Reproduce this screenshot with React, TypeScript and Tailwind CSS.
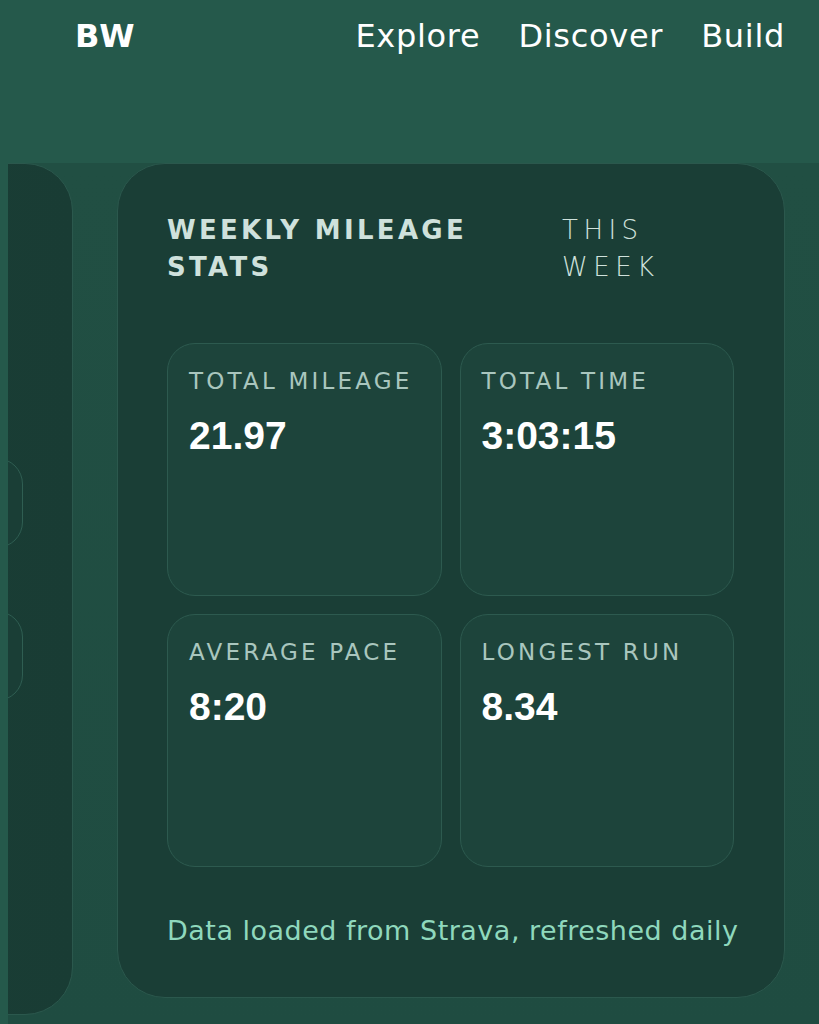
import React from 'react';

const stats = [
  { label: 'TOTAL MILEAGE', value: '21.97' },
  { label: 'TOTAL TIME', value: '3:03:15' },
  { label: 'AVERAGE PACE', value: '8:20' },
  { label: 'LONGEST RUN', value: '8.34' },
];

function StatCard({ label, value }: { label: string; value: string }) {
  return (
    <div className="h-[253px] rounded-[28px] border border-[#2d5a4f] bg-[#1d443b] px-[21px] pt-[23px]">
      <p className="text-[23px] leading-[28px] font-normal tracking-[3.2px] text-[#a9c6be]">{label}</p>
      <p className="mt-[19px] text-[39px] leading-[44px] font-bold text-white font-['Liberation_Sans',sans-serif]">
        {value}
      </p>
    </div>
  );
}

export default function App() {
  return (
    <div className="w-[819px] h-[1024px] overflow-hidden bg-[#25594b] font-['DejaVu_Sans',sans-serif]">
      {/* Cabecera */}
      <header className="flex items-center h-[72px] pl-[75px] pr-[34px]">
        <span className="text-[32px] font-bold tracking-[1.5px] text-white">BW</span>
        <nav className="ml-auto flex items-center gap-[38px] text-[32px] tracking-[0.7px] text-white">
          <a>Explore</a>
          <a>Discover</a>
          <a>Build</a>
        </nav>
      </header>

      {/* Carrusel */}
      <div className="mt-[91px] ml-[8px] h-[861px] overflow-hidden flex items-start gap-[44px] bg-gradient-to-b from-[#214f43] to-[#1f4c41]">
        <div className="ml-[-603px] shrink-0 w-[668px] h-[852px] rounded-[48px] border border-[#2b584d] bg-gradient-to-r from-[#1b4239] to-[#193c34] pt-[294px] pr-[49px] flex flex-col items-end gap-[63px]">
          <div className="w-[300px] h-[90px] rounded-[26px] border border-[#2f5e52] bg-[#1a3e36]" />
          <div className="w-[300px] h-[90px] rounded-[26px] border border-[#2f5e52] bg-[#1a3e36]" />
        </div>

        <section className="shrink-0 w-[668px] h-[835px] rounded-[48px] border border-[#2b584d] bg-[#1a3e36] pl-[49px] pr-[50px] pt-[48px]">
          <div className="flex">
            <h2 className="w-[395px] text-[26px] leading-[37px] font-bold tracking-[3.3px] text-[#cfe1dc]">
              WEEKLY MILEAGE
              <br />
              STATS
            </h2>
            <p className="w-[140px] text-[26px] leading-[37px] font-light tracking-[5.5px] text-[#cfe1dc]">
              THIS
              <br />
              WEEK
            </p>
          </div>

          <div className="mt-[57px] grid grid-cols-2 gap-[18px]">
            {stats.map((s) => (
              <StatCard key={s.label} label={s.label} value={s.value} />
            ))}
          </div>

          <p className="mt-[46px] text-[27px] leading-[36px] font-normal tracking-[0.5px] text-[#8fd8bd] whitespace-nowrap">
            Data loaded from Strava, refreshed daily
          </p>
        </section>
      </div>
    </div>
  );
}
